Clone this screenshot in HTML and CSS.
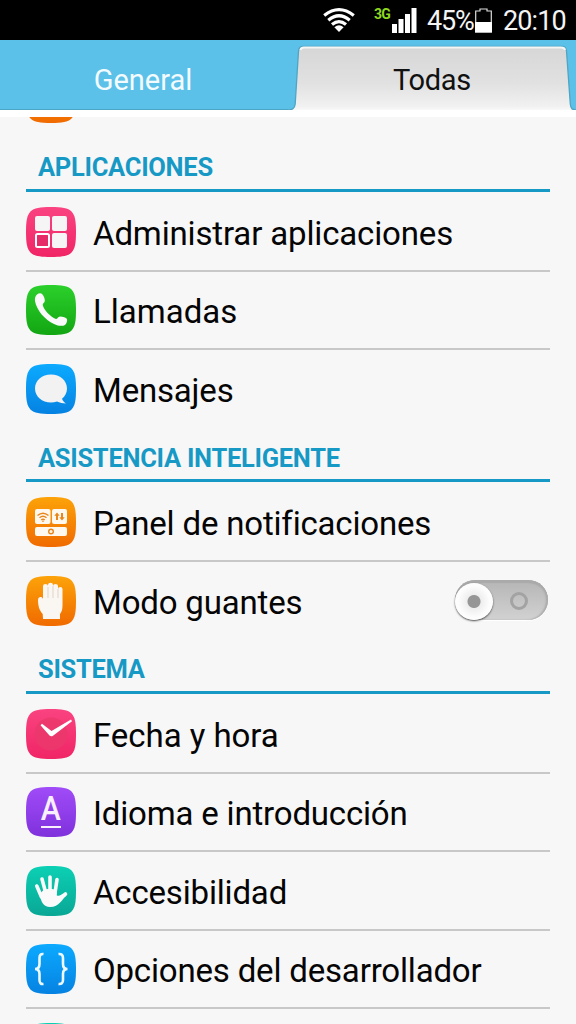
FILE: index.html
```html
<!DOCTYPE html>
<html lang="es">
<head>
<meta charset="utf-8">
<title>Ajustes</title>
<link rel="stylesheet" href="styles.css">
</head>
<body>
<svg class="defs" width="0" height="0" aria-hidden="true">
  <defs>
    <linearGradient id="pink" x2="0" y2="1"><stop stop-color="#fa4380"/><stop offset="1" stop-color="#f02566"/></linearGradient>
    <linearGradient id="green" x2="0" y2="1"><stop stop-color="#2bd02b"/><stop offset="1" stop-color="#12a612"/></linearGradient>
    <linearGradient id="blue" x2="0" y2="1"><stop stop-color="#0caaff"/><stop offset="1" stop-color="#0582e2"/></linearGradient>
    <linearGradient id="orange" x2="0" y2="1"><stop stop-color="#fca309"/><stop offset="1" stop-color="#f06a00"/></linearGradient>
    <linearGradient id="purple" x2="0" y2="1"><stop stop-color="#a04cf8"/><stop offset="1" stop-color="#7f31dc"/></linearGradient>
    <linearGradient id="teal" x2="0" y2="1"><stop stop-color="#0bd0b4"/><stop offset="1" stop-color="#0aa795"/></linearGradient>
    <linearGradient id="tab" x2="0" y2="1"><stop stop-color="#d6d6d6"/><stop offset=".55" stop-color="#e1e1e1"/><stop offset=".9" stop-color="#f1f1f1"/><stop offset="1" stop-color="#fff"/></linearGradient>
    <path id="tile" d="M25 0C36 0 42 1 45.500 4.500C49 8 50 14 50 25S49 42 45.500 45.500C42 49 36 50 25 50S8 49 4.500 45.500C1 42 0 36 0 25S1 8 4.500 4.500C8 1 14 0 25 0Z"/>
  </defs>
</svg>

<div class="statusbar">
  <svg class="wifi" width="32" height="24" viewBox="0 0 32 24"><g fill="none" stroke="#fff" stroke-width="3.2"><path d="M1.200 7.500Q16 -4.200 30.800 7.500"/><path d="M5.300 12.200Q16 3.300 26.700 12.200"/><path d="M9 16.500Q16 10.600 23 16.500"/></g><path d="M11.400 19.300Q16 15.300 20.600 19.300L16 24Z" fill="#fff"/></svg>
  <span class="network">3G</span>
  <svg class="signal" width="26" height="25" viewBox="0 0 26 25" fill="#fff"><path d="M0 16h5v9H0zM6.500 11h5v14h-5zM13 6h5v19h-5zM19.500 0h5v25h-5z"/></svg>
  <span class="level">45%</span>
  <svg class="battery" width="17" height="25" viewBox="0 0 17 25"><path d="M.7 24V3H5V1h7v2h4.300v21Z" fill="none" stroke="#ddd" stroke-width="1.2"/><path d="M0 14h17v10.500H0z" fill="#fff"/></svg>
  <span class="clock">20:10</span>
</div>

<div class="tabs">
  <div class="tab"><span class="tab-label general">General</span></div>
  <div class="tab active">
    <svg class="tab-shape" width="288" height="70" viewBox="288 0 288 70"><path d="M286 70C292 70 294.800 69 295.200 64L298.500 11Q299 6.500 303 6.500H562Q566 6.500 566.500 11L570.300 64C570.700 69 572 70 578 70V73H286Z" fill="url(#tab)" stroke="#4fa5c3" stroke-width="1.300"/><path d="M300.500 10Q301 7.500 304 7.500H561Q564.500 7.500 565 10" fill="none" stroke="#f6f6f6" stroke-width="2"/></svg>
    <span class="tab-label todas">Todas</span>
  </div>
</div>

<main class="viewport">
  <div class="list">
    <div class="row last"><svg class="icon" viewBox="0 0 50 50"><use href="#tile" fill="url(#orange)"/></svg></div>

    <h2 class="section"><span class="s1">APLICACIONES</span></h2>
    <div class="row">
      <svg class="icon" viewBox="0 0 50 50"><use href="#tile" fill="url(#pink)"/><g fill="#f5f5f5"><rect x="9" y="9" width="15" height="15" rx="2"/><rect x="26" y="9" width="15" height="15" rx="2"/><rect x="26" y="26" width="15" height="15" rx="2"/></g><rect x="10" y="27" width="13" height="13" rx="1.500" fill="#e62c68" stroke="#fff" stroke-width="2"/></svg>
      <span class="label l1">Administrar aplicaciones</span>
    </div>
    <div class="row">
      <svg class="icon" viewBox="0 0 50 50"><use href="#tile" fill="url(#green)"/><path d="M11 9.500C13 8 15 7.800 16.500 9.500C18 11.500 19 14 18.800 16C18.600 18 16.500 18.300 16.700 20C18 25 24 31.500 30 34C31.500 34 32 31.800 34 31.500C37 31.700 40 32.700 41 34C41.500 36 40.500 38.500 39 40C36.500 41.500 32 41 28 39C19 35 10.500 25 9 16C8.700 13 9.300 11 11 9.500Z" fill="#fafafa"/></svg>
      <span class="label l2">Llamadas</span>
    </div>
    <div class="row last">
      <svg class="icon" viewBox="0 0 50 50"><use href="#tile" fill="url(#blue)"/><path d="M25 10.500C34 10.500 41 16.500 41 24.500C41 28.800 39 32.200 36 34.800C36.500 36.500 38 38.200 40 39.500C37 39.500 33.500 38.800 31 37.600C29 38.300 27 38.600 25 38.600C16 38.600 9 32.500 9 24.500S16 10.500 25 10.500Z" fill="#f2f2f2"/></svg>
      <span class="label l3">Mensajes</span>
    </div>

    <h2 class="section"><span class="s2">ASISTENCIA INTELIGENTE</span></h2>
    <div class="row">
      <svg class="icon" viewBox="0 0 50 50"><use href="#tile" fill="url(#orange)"/><g fill="#fff8ee"><rect x="9" y="12" width="15.500" height="15" rx="2"/><rect x="26" y="12" width="15" height="15" rx="2"/><rect x="9" y="30" width="32" height="9" rx="2"/></g><g fill="none" stroke="#e8861b" stroke-width="1.400"><path d="M11.500 18.500Q17 13.800 22.500 18.500M13.500 20.800Q17 17.800 20.500 20.800M15.300 22.900Q17 21.500 18.700 22.900"/><circle cx="25" cy="34.500" r="2.300"/></g><circle cx="17" cy="24.200" r=".8" fill="#e8861b"/><path d="M31 23V17M36 16v6" stroke="#e8861b" stroke-width="2"/><path d="M28.300 18.800L31 15.500l2.700 3.300zM33.300 20.200h5.400L36 23.500z" fill="#e8861b"/></svg>
      <span class="label l4">Panel de notificaciones</span>
    </div>
    <div class="row last">
      <svg class="icon" viewBox="0 0 50 50"><use href="#tile" fill="url(#orange)"/><path d="M17 43L16.700 38C13 34 12 29 12 24C12 20.500 16 20 17 23V10Q17 8 19.500 8Q22 8 22 10V9Q22 6.800 24.500 6.800Q27 6.800 27 9V10Q27 8 29.500 8Q32 8 32 10V13Q32 11 34.200 11Q36.500 11 36.500 13V29C36.500 34 35.500 36 34 38V43Z" fill="#faf6f1"/><path d="M22 11V22M27 10V22M32 13V22" stroke="#dfd5ca" stroke-width="1"/></svg>
      <span class="label l5">Modo guantes</span>
      <span class="switch"><span class="ring"></span><span class="knob"></span></span>
    </div>

    <h2 class="section"><span class="s3">SISTEMA</span></h2>
    <div class="row">
      <svg class="icon" viewBox="0 0 50 50"><use href="#tile" fill="url(#pink)"/><circle cx="25" cy="25" r="16.500" fill="#ea386c" opacity=".8"/><path d="M14.500 16.200L16 14.800L25.500 22L45 10.500L46 12.300L27 26.800Q25 28 23.500 26.500Z" fill="#fff"/></svg>
      <span class="label l6">Fecha y hora</span>
    </div>
    <div class="row">
      <svg class="icon" viewBox="0 0 50 50"><use href="#tile" fill="url(#purple)"/><text class="letter" x="24.800" y="33" text-anchor="middle" textLength="20" lengthAdjust="spacingAndGlyphs">A</text><path d="M15 40H35" stroke="#f8efff" stroke-width="2"/></svg>
      <span class="label l7">Idioma e introducción</span>
    </div>
    <div class="row">
      <svg class="icon" viewBox="0 0 50 50"><use href="#tile" fill="url(#teal)"/><g fill="none" stroke="#fafafa" stroke-width="3.600" stroke-linecap="round"><path d="M10.800 20L15.500 31M16 13L19.500 26M24 11V25M31 13.500L29 27"/><path d="M39.500 28L33 33"/></g><path d="M13.700 28L18 23.500L22.200 23H26L30.800 24V29.500Q34 30.500 36.500 28L40.500 29.500C36 33 33.500 41 24 41C17.500 41 15 36 13.700 28Z" fill="#fafafa"/></svg>
      <span class="label l8">Accesibilidad</span>
    </div>
    <div class="row">
      <svg class="icon" viewBox="0 0 50 50"><use href="#tile" fill="url(#blue)"/><path d="M17.500 10Q13.500 9.500 13.500 14V20Q13.500 25 9 25Q13.500 25 13.500 30V36Q13.500 40.500 17.500 40M32.500 10Q37 9.500 37 14V20Q37 25 41.500 25Q37 25 37 30V36Q37 40.500 32.500 40" fill="none" stroke="#eef8ff" stroke-width="2.600"/></svg>
      <span class="label l9">Opciones del desarrollador</span>
    </div>
    <div class="row last"><svg class="icon" viewBox="0 0 50 50"><use href="#tile" fill="url(#teal)"/></svg></div>
  </div>
</main>
</body>
</html>
```

FILE: styles.css
```css
* { box-sizing: border-box; }

body {
  margin: 0;
  width: 576px;
  height: 1024px;
  overflow: hidden;
  display: flex;
  flex-direction: column;
  background: #f7f7f7;
  font-family: Roboto, "Noto Sans", sans-serif;
}

.defs { position: absolute; }

.statusbar {
  flex: none;
  height: 40px;
  background: #000;
  color: #f4f4f4;
  display: flex;
  align-items: flex-start;
  padding: 8px 0 0 323px;
  font-size: 27px;
  line-height: 26px;
  white-space: nowrap;
}

.statusbar svg { flex: none; }
.network { width: 17px; margin-left: 19px; color: #8ed81e; font-size: 14px; line-height: 12px; font-weight: 700; letter-spacing: -0.9px; }
.signal { margin-left: 1px; }
.level { width: 48px; margin-left: 9px; letter-spacing: -1.2px; }
.clock { margin-left: 11px; letter-spacing: -0.9px; }

.tabs {
  flex: none;
  height: 77px;
  padding-bottom: 7px;
  background: #fff;
  display: grid;
  grid-template-columns: 288px 288px;
}

.tab {
  display: grid;
  place-items: center;
  background: #5bc1e8;
  border-bottom: 1px solid #4ba5c5;
  color: #f4fbff;
  font-size: 29px;
}

.tab > * { grid-area: 1 / 1; }
.tab.active { color: #111; border: 0; overflow: hidden; }
.tab-shape { display: block; }
.tab-label { margin-top: 9px; position: relative; white-space: nowrap; }
.general { left: -1px; top: 1px; }
.todas { left: 0; letter-spacing: -0.3px; }

.viewport { flex: 1; min-height: 0; overflow: hidden; }
.list { margin-top: -58px; padding: 0 26px; }

.row {
  height: 78.5px;
  display: flex;
  align-items: flex-start;
  padding-top: 13.8px;
  border-bottom: 2px solid #c8c8c8;
}

.row.last { border-bottom-color: transparent; }
.icon { flex: none; width: 50px; height: 50px; display: block; }
.letter { font: 500 33px Roboto, sans-serif; fill: #f8efff; }

.label {
  margin-left: 17px;
  font-size: 33px;
  line-height: 53px;
  letter-spacing: -0.18px;
  color: #050505;
  white-space: nowrap;
}

.l1 { letter-spacing: -0.15px; }
.l2 { letter-spacing: 0; }
.l6 { letter-spacing: -0.05px; }

.section {
  margin: 0 0 1.3px;
  height: 53.5px;
  padding: 14px 0 0 12px;
  border-bottom: 3px solid #1799c6;
  color: #1799c6;
  font-size: 25.5px;
  font-weight: 700;
  line-height: 30px;
  letter-spacing: -0.28px;
}

.row:first-child { height: 79.3px; }

.switch {
  position: relative;
  flex: none;
  width: 93px;
  height: 40px;
  margin: 4px 2px 0 auto;
  border-radius: 20px;
  background: linear-gradient(#b5b5b5, #d2d2d2);
  box-shadow: inset 0 3px 1px #aaa, inset -2px 0 2px #aaa, 0 1px 1px #fff;
}

.knob {
  position: absolute;
  left: 0;
  top: 3px;
  width: 38px;
  height: 37px;
  border-radius: 50%;
  background: radial-gradient(circle, #969696 0 6px, #eee 7px, #fdfdfd 16px);
  box-shadow: 0 1px 2px #444;
}

.ring {
  position: absolute;
  left: 55px;
  top: 12px;
  width: 18px;
  height: 18px;
  border: 3px solid #a3a3a3;
  border-radius: 50%;
}
```
